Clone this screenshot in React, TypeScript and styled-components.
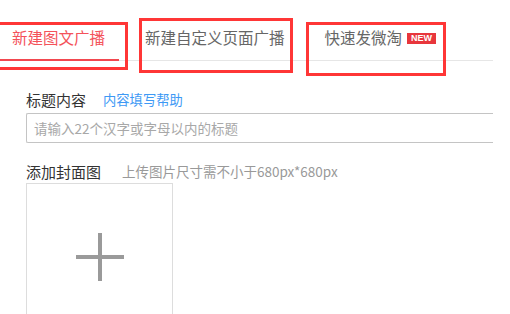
import React from "react";
import styled, { createGlobalStyle } from "styled-components";

const Global = createGlobalStyle`
  html, body { margin: 0; padding: 0; background: #fff; }
  body { font-family: "Noto Sans CJK SC", "Noto Sans", "Liberation Sans", sans-serif; }
`;

const Page = styled.div`
  position: relative;
  width: 510px;
  height: 314px;
  overflow: hidden;
  background: #fff;
`;

const TabBar = styled.div`
  display: flex;
  align-items: flex-end;
  width: 493px;
  height: 61px;
  box-sizing: border-box;
  border-bottom: 1px solid #e6e6e6;
`;

const Tab = styled.div<{ $active?: boolean }>`
  display: flex;
  align-items: center;
  height: 48px;
  box-sizing: border-box;
  padding: ${(p) => (p.$active ? "0 14px 0 12px" : "0 20px")};
  margin-right: ${(p) => (p.$active ? "6px" : "0")};
  margin-bottom: -1px;
  font-size: 15.5px;
  line-height: 20px;
  white-space: nowrap;
  color: ${(p) => (p.$active ? "#f4525a" : "#666")};
  box-shadow: ${(p) => (p.$active ? "inset 0 -2px 0 #f2474f" : "none")};
  padding-bottom: 1px;
`;

const NewBadge = styled.span`
  display: inline-flex;
  align-items: center;
  justify-content: center;
  margin-left: 5px;
  margin-top: 3px;
  width: 29px;
  height: 11px;
  background: #e8363c;
  color: #fff;
  font-family: "Liberation Sans", Arial, sans-serif;
  font-weight: 700;
  font-size: 9px;
  line-height: 11px;
`;

const Form = styled.div`
  padding-left: 26px;
`;

const LabelRow = styled.div<{ $top: number }>`
  display: flex;
  align-items: center;
  height: 20px;
  margin-top: ${(p) => p.$top}px;
`;

const Label = styled.span`
  font-size: 15px;
  color: #333;
  margin-right: 17px;
`;

const HelpLink = styled.a`
  font-size: 13.3px;
  color: #3d99f5;
  text-decoration: none;
`;

const Hint = styled.span`
  font-size: 13.5px;
  color: #999;
  margin-left: 4px;
`;

const Input = styled.input`
  display: block;
  margin-top: 4px;
  width: 467px;
  height: 30px;
  box-sizing: border-box;
  border: 1px solid #c4c4c4;
  border-right: none;
  border-radius: 2px 0 0 2px;
  padding: 0 0 0 7px;
  font-family: inherit;
  font-size: 13.5px;
  outline: none;
  &::placeholder { color: #a8a8a8; }
`;

const UploadBox = styled.div`
  margin-top: 2px;
  width: 147px;
  height: 148px;
  box-sizing: border-box;
  border: 1px solid #ddd;
  display: flex;
  align-items: center;
  justify-content: center;
`;

const Mark = styled.div<{ $l: number; $t: number; $w: number; $h: number }>`
  position: absolute;
  left: ${(p) => p.$l}px;
  top: ${(p) => p.$t}px;
  width: ${(p) => p.$w}px;
  height: ${(p) => p.$h}px;
  box-sizing: border-box;
  border: 3px solid #ff3636;
  pointer-events: none;
`;

export default function App() {
  return (
    <Page>
      <Global />
      <TabBar>
        <Tab $active>新建图文广播</Tab>
        <Tab>新建自定义页面广播</Tab>
        <Tab>
          快速发微淘
          <NewBadge>NEW</NewBadge>
        </Tab>
      </TabBar>
      <Form>
        <LabelRow $top={28}>
          <Label>标题内容</Label>
          <HelpLink>内容填写帮助</HelpLink>
        </LabelRow>
        <Input placeholder="请输入22个汉字或字母以内的标题" />
        <LabelRow $top={18}>
          <Label>添加封面图</Label>
          <Hint>上传图片尺寸需不小于680px*680px</Hint>
        </LabelRow>
        <UploadBox>
          <svg width="48" height="48" viewBox="0 0 48 48">
            <rect x="0" y="22" width="48" height="4" fill="#9a9a9a" />
            <rect x="22" y="0" width="4" height="48" fill="#9a9a9a" />
          </svg>
        </UploadBox>
      </Form>
      <Mark $l={-3} $t={22} $w={131} $h={48} />
      <Mark $l={139} $t={18} $w={154} $h={55} />
      <Mark $l={306} $t={22} $w={140} $h={54} />
    </Page>
  );
}
